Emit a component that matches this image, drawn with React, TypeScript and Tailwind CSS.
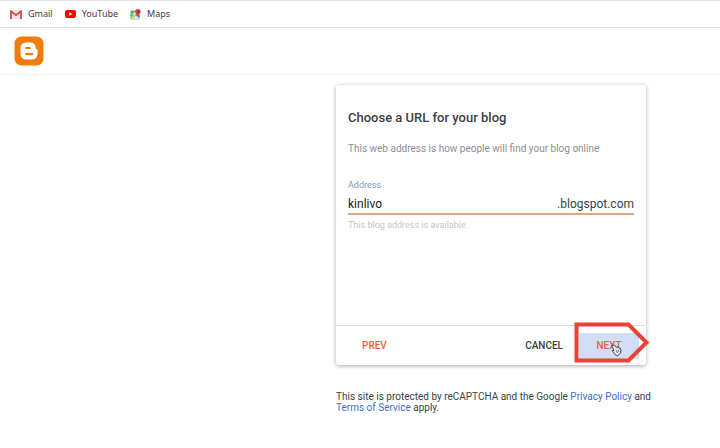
import type { ReactNode } from 'react';

function GmailIcon() {
  return (
    <svg viewBox="0 0 24 18" className="w-3 h-[9px]" aria-hidden="true">
      <rect width="24" height="18" rx="2" fill="#eee3e3" />
      <path d="M2 18V2.500l10 8 10-8V18" fill="none" stroke="#cf4b45" strokeWidth="3.500" />
    </svg>
  );
}

function YouTubeIcon() {
  return (
    <svg viewBox="0 0 22 16" className="w-[11px] h-2" aria-hidden="true">
      <rect width="22" height="16" rx="4" fill="#f00" />
      <path d="M8.500 4.500v7l6-3.500z" fill="#fff" />
    </svg>
  );
}

function MapsIcon() {
  return (
    <svg viewBox="0 0 22 22" className="w-[11px] h-[11px]" aria-hidden="true">
      <rect x="1" y="3" width="18" height="18" rx="2" fill="#4caf6a" />
      <path d="M3 21 12 12l7 7v2z" fill="#dfe3e6" />
      <path d="M12 12l3-3 4 4v6z" fill="#4285e8" />
      <path d="M1 18 15 4h3L2 21z" fill="#f5d565" />
      <path d="M4 8.500a3 3 0 1 0 3-3M7 8.500h3" fill="none" stroke="#fff" strokeWidth="1.500" />
      <path d="M16 0a5.500 5.500 0 0 0-5.500 5.500C10.500 9.500 15 10 16 15c1-5 5.500-5.500 5.500-9.500A5.500 5.500 0 0 0 16 0z" fill="#e0403a" />
      <circle cx="16" cy="5.500" r="2" fill="#8d1f1b" />
    </svg>
  );
}

function BloggerLogo() {
  return (
    <svg viewBox="0 0 30 30" className="w-[30px] h-[30px]" role="img" aria-label="Blogger">
      <rect x="0.500" y="0.500" width="29" height="29" rx="7" fill="#f07c0c" />
      <path
        d="M12 6.500h4.500a5 5 0 0 1 5 4.600c0 1.300.4 1.900 1.200 1.900.6 0 .9.400.9 1v4a5.500 5.500 0 0 1-5.500 5.500H12A5.500 5.500 0 0 1 6.500 18v-6A5.500 5.500 0 0 1 12 6.500z"
        fill="#fff"
      />
      <path d="M12 12h4M12 18h6.500" stroke="#f07c0c" strokeWidth="2" strokeLinecap="round" />
    </svg>
  );
}

function NextMarker() {
  return (
    <svg viewBox="0 0 76 41" className="absolute left-[-5px] top-[-11px] w-[76px] h-[41px] pointer-events-none" aria-hidden="true">
      <path d="M2.500 2.500H54.500L72.500 20.500 54.500 38.500H2.500z" fill="none" stroke="#ea4335" strokeWidth="4" />
      <g transform="translate(37 23)">
        <path
          d="M.5.500 3.500 0 5.500 2.500l1.500-.8 1 1.300 1.300.2.700 1.800-.3 3L6.500 11 4 9.500 1.200 5.500l1.800-.3z"
          fill="#e8e8ea"
          stroke="#333"
          strokeWidth="0.900"
        />
        <path d="M5 5 6.500 8M7 4.500 8 7" stroke="#444" strokeWidth="0.700" />
      </g>
    </svg>
  );
}

function Bookmark({ href, icon, children }: { href: string; icon: ReactNode; children: ReactNode }) {
  return (
    <a href={href} className="flex items-center gap-[6px]">
      {icon}
      {children}
    </a>
  );
}

function App() {
  return (
    <div className="min-h-screen bg-white font-['Roboto',sans-serif] text-[#3c4043]">
      <nav className="h-7 flex items-center gap-3 px-[10px] border-t border-b border-t-[#e4e4e4] border-b-[#dedede] font-['Noto_Sans',sans-serif] text-[9px]">
        <Bookmark href="#gmail" icon={<GmailIcon />}>Gmail</Bookmark>
        <Bookmark href="#youtube" icon={<YouTubeIcon />}>YouTube</Bookmark>
        <Bookmark href="#maps" icon={<MapsIcon />}>Maps</Bookmark>
      </nav>
      <header className="h-[47px] flex items-center px-[14px] border-b border-[#f1f1f1]">
        <BloggerLogo />
      </header>

      <main className="pt-[10px] pl-[336px] pr-16">
        <form className="mr-[10px] rounded-[3px] bg-white shadow-[0_1px_4px_rgba(0,0,0,0.35)]" onSubmit={(e) => e.preventDefault()}>
          <div className="px-3 pt-6 pb-[94px]">
            <h1 className="text-[13px] leading-[18px] font-medium">Choose a URL for your blog</h1>
            <p className="mt-[14px] text-[10px] leading-4 text-[#8c8f92]">This web address is how people will find your blog online</p>
            <label htmlFor="address" className="block mt-[22px] text-[9px] leading-3 text-[#8196c4]">Address</label>
            <div className="flex items-center mt-1 h-5 border-b-2 border-[#e0a487] text-[12px]">
              <input id="address" defaultValue="kinlivo" className="flex-1 min-w-0 bg-transparent outline-none text-[#202124]" />
              <span>.blogspot.com</span>
            </div>
            <p className="mt-1 text-[9px] leading-3 text-[#c2c4c6]">This blog address is available.</p>
          </div>
          <div className="h-10 flex items-center border-t border-[#dcdcdc] pl-[26px] pr-[7px] text-[10px] font-medium">
            <button type="button" className="text-[#e8623a]">PREV</button>
            <button type="button" className="ml-auto mr-4">CANCEL</button>
            <div className="relative">
              <button type="submit" className="block w-15 h-[26px] bg-[#d2ddf8] text-[#ea5f48]">NEXT</button>
              <NextMarker />
            </div>
          </div>
        </form>
        <p className="mt-[26px] text-[10px] leading-[11px]">
          This site is protected by reCAPTCHA and the Google <a href="#privacy" className="text-[#3f6fd1]">Privacy Policy</a> and{' '}
          <a href="#terms" className="text-[#3f6fd1]">Terms of Service</a> apply.
        </p>
      </main>
    </div>
  );
}

export default App;
